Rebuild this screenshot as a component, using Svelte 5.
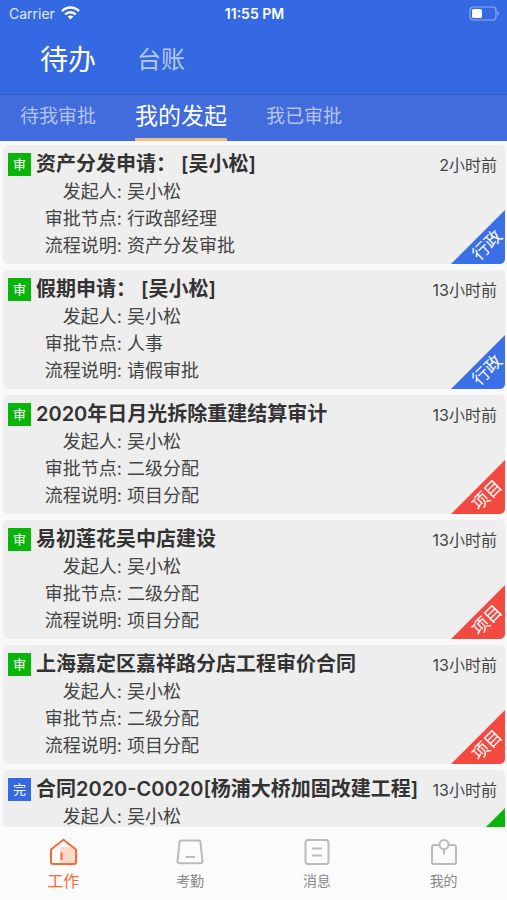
<script lang="ts">
	type Task = {
		id: number;
		status: string;
		title: string;
		time: string;
		starter: string;
		node: string;
		note?: string;
		kind: string;
		color: string;
	};

	const mainTabs = ['待办', '台账'];
	const subTabs = ['待我审批', '我的发起', '我已审批'];

	const tasks: Task[] = [
		{ id: 1, status: '审', title: '资产分发申请： [吴小松]', time: '2小时前', starter: '吴小松', node: '行政部经理', note: '资产分发审批', kind: '行政', color: 'blue' },
		{ id: 2, status: '审', title: '假期申请： [吴小松]', time: '13小时前', starter: '吴小松', node: '人事', note: '请假审批', kind: '行政', color: 'blue' },
		{ id: 3, status: '审', title: '2020年日月光拆除重建结算审计', time: '13小时前', starter: '吴小松', node: '二级分配', note: '项目分配', kind: '项目', color: 'red' },
		{ id: 4, status: '审', title: '易初莲花吴中店建设', time: '13小时前', starter: '吴小松', node: '二级分配', note: '项目分配', kind: '项目', color: 'red' },
		{ id: 5, status: '审', title: '上海嘉定区嘉祥路分店工程审价合同', time: '13小时前', starter: '吴小松', node: '二级分配', note: '项目分配', kind: '项目', color: 'red' },
		{ id: 6, status: '完', title: '合同2020-C0020[杨浦大桥加固改建工程]', time: '13小时前', starter: '吴小松', node: '完成', kind: '合同', color: 'green' }
	];

	const navItems = [
		{ id: 'work', label: '工作' },
		{ id: 'attendance', label: '考勤' },
		{ id: 'message', label: '消息' },
		{ id: 'mine', label: '我的' }
	];

	let mainTab = $state('待办');
	let subTab = $state('我的发起');
	let page = $state('work');
</script>

<div class="app">
	<header>
		<div class="status-bar">
			<span class="carrier">
				Carrier
				<svg width="19" height="14" viewBox="0 0 19 14" fill="none" stroke="#fff" stroke-width="2.4">
					<path d="M1 5.2C5.8.3 13.2.3 18 5.2" />
					<path d="M4.2 8.5c3-3 7.6-3 10.6 0" />
					<path d="M9.5 13.6 6.6 10.6c1.7-1.5 4.1-1.5 5.8 0z" fill="#fff" stroke="none" />
				</svg>
			</span>
			<span class="clock">11:55 PM</span>
			<span class="battery">
				<svg width="31" height="15" viewBox="0 0 31 15">
					<rect x="1" y="1" width="26" height="13" rx="3.5" fill="none" stroke="#8fabf2" stroke-width="1.2" />
					<rect x="3" y="3" width="10" height="9" rx="1.5" fill="#fff" />
					<path d="M28.5 5.3c2 .6 2 3.8 0 4.4z" fill="#8fabf2" />
				</svg>
			</span>
		</div>
		<nav class="main-tabs">
			{#each mainTabs as tab}
				<button type="button" class:active={mainTab === tab} onclick={() => (mainTab = tab)}>{tab}</button>
			{/each}
		</nav>
		<nav class="sub-tabs">
			{#each subTabs as tab}
				<button type="button" class:active={subTab === tab} onclick={() => (subTab = tab)}>{tab}</button>
			{/each}
		</nav>
	</header>

	<main>
		{#each tasks as task (task.id)}
			<article class="card">
				<div class="card-head">
					<span class="status" class:done={task.status === '完'}>{task.status}</span>
					<h2>{task.title}</h2>
					<time>{task.time}</time>
				</div>
				<dl>
					<div class="row"><dt>发起人:</dt><dd>{task.starter}</dd></div>
					<div class="row"><dt>审批节点:</dt><dd>{task.node}</dd></div>
					{#if task.note}
						<div class="row"><dt>流程说明:</dt><dd>{task.note}</dd></div>
					{/if}
				</dl>
				<div class="ribbon {task.color}"><span>{task.kind}</span></div>
			</article>
		{/each}
	</main>

	<nav class="tab-bar">
		{#each navItems as item}
			<button type="button" class:active={page === item.id} onclick={() => (page = item.id)}>
				<svg width="28" height="28" viewBox="0 0 28 28" fill="none" stroke="currentColor" stroke-width="2" stroke-linejoin="round">
					{#if item.id === 'work'}
						<path d="M14 9h9a3 3 0 0 1 3 3v14H14a3 3 0 0 1-3-3V12a3 3 0 0 1 3-3z" fill="#ffd9cc" stroke="none" />
						<path d="M2 11.500 14.500 1.800 27 11.500V24a2 2 0 0 1-2 2H4a2 2 0 0 1-2-2z" />
						<path d="M12.500 14.500V22" />
					{:else if item.id === 'attendance'}
						<path d="M5.500 2.500h17a2 2 0 0 1 2 1.800l2 18.700a2 2 0 0 1-2 2.200h-21a2 2 0 0 1-2-2.200l2-18.700a2 2 0 0 1 2-1.800z" />
						<path d="M9.500 19h9.500" />
					{:else if item.id === 'message'}
						<rect x="2.500" y="2" width="23" height="24" rx="2.500" />
						<path d="M9 10.500h10M9 17.500h10" />
					{:else}
						<path d="M9 7H4a2 2 0 0 0-2 2v15a2 2 0 0 0 2 2h20a2 2 0 0 0 2-2V9a2 2 0 0 0-2-2h-5" />
						<circle cx="14" cy="6.500" r="4.500" />
						<path d="M14 11v5.500" />
					{/if}
				</svg>
				<span>{item.label}</span>
			</button>
		{/each}
	</nav>
</div>

<style>
	:global(body) {
		margin: 0;
	}

	.app {
		display: flex;
		flex-direction: column;
		height: 100vh;
		background: #f9f9f9;
		color: #333;
		font-family: Inter, 'Noto Sans CJK SC', sans-serif;
	}

	button {
		padding: 0;
		border: none;
		background: none;
		font-family: inherit;
		cursor: pointer;
	}

	header {
		flex: none;
		background: #3569e4;
		color: #fff;
	}

	.status-bar {
		display: grid;
		grid-template-columns: 1fr auto 1fr;
		align-items: center;
		height: 26px;
		padding: 0 7px 0 9px;
		font-size: 14px;
	}

	.carrier {
		display: flex;
		align-items: center;
		gap: 6px;
		color: #e3eafb;
	}

	.clock {
		font-weight: 600;
	}

	.battery {
		display: flex;
		justify-content: flex-end;
	}

	.main-tabs {
		display: flex;
		align-items: center;
		gap: 41px;
		height: 68px;
		padding: 0 40px;
	}

	.main-tabs button {
		color: #b5c8f6;
		font-size: 24px;
		line-height: 36px;
	}

	.main-tabs .active {
		color: #fff;
		font-size: 28px;
	}

	.sub-tabs {
		display: flex;
		gap: 39px;
		height: 46px;
		padding: 0 20px;
		border-top: 1px solid #365fc9;
		background: #416cdb;
	}

	.sub-tabs button {
		box-sizing: border-box;
		border-bottom: 3px solid transparent;
		color: #b3c4f1;
		font-size: 19px;
		line-height: 43px;
	}

	.sub-tabs .active {
		border-color: #f0bd85;
		color: #fff;
		font-size: 23px;
	}

	main {
		flex: 1;
		min-height: 0;
		display: flex;
		flex-direction: column;
		gap: 6px;
		padding: 4px 2px 0 3px;
		overflow-y: auto;
		scrollbar-width: none;
	}

	.card {
		position: relative;
		flex: none;
		padding: 6px 8px 5px 5px;
		border-radius: 5px;
		background: #eee;
		overflow: hidden;
	}

	.card-head {
		display: flex;
		align-items: center;
		height: 27px;
	}

	.status {
		flex: none;
		width: 23px;
		margin-right: 5px;
		background: #0ab50a;
		color: #fff;
		font-size: 13px;
		line-height: 23px;
		text-align: center;
	}

	.status.done {
		background: #3569e4;
	}

	h2 {
		flex: 1;
		margin: 0;
		font-size: 20px;
		font-weight: 600;
		line-height: 27px;
		white-space: nowrap;
	}

	time {
		color: #444;
		font-size: 16px;
		line-height: 26px;
	}

	dl {
		margin: 0;
	}

	.row {
		display: flex;
		gap: 5px;
		color: #444;
		font-size: 18px;
		line-height: 27px;
	}

	dt {
		width: 114px;
		text-align: right;
	}

	dd {
		margin: 0;
	}

	.ribbon {
		position: absolute;
		right: 0;
		bottom: 0;
		width: 54px;
		height: 54px;
		clip-path: polygon(100% 0, 100% 100%, 0 100%);
		color: #fff;
	}

	.ribbon span {
		position: absolute;
		right: -2px;
		bottom: 6px;
		width: 40px;
		font-size: 17px;
		line-height: 26px;
		text-align: center;
		transform: rotate(-45deg);
	}

	.blue {
		background: #3b6fe8;
	}

	.red {
		background: #f24a40;
	}

	.green {
		background: #0ab50a;
	}

	.tab-bar {
		flex: none;
		display: flex;
		height: 73px;
		background: #fbfbfb;
	}

	.tab-bar button {
		flex: 1;
		display: flex;
		flex-direction: column;
		align-items: center;
		gap: 5px;
		padding-top: 11px;
		color: #bbb;
	}

	.tab-bar span {
		color: #888;
		font-size: 14px;
		line-height: 20px;
	}

	.tab-bar .active {
		color: #f76b38;
	}

	.tab-bar .active span {
		color: inherit;
		font-size: 16px;
	}
</style>
